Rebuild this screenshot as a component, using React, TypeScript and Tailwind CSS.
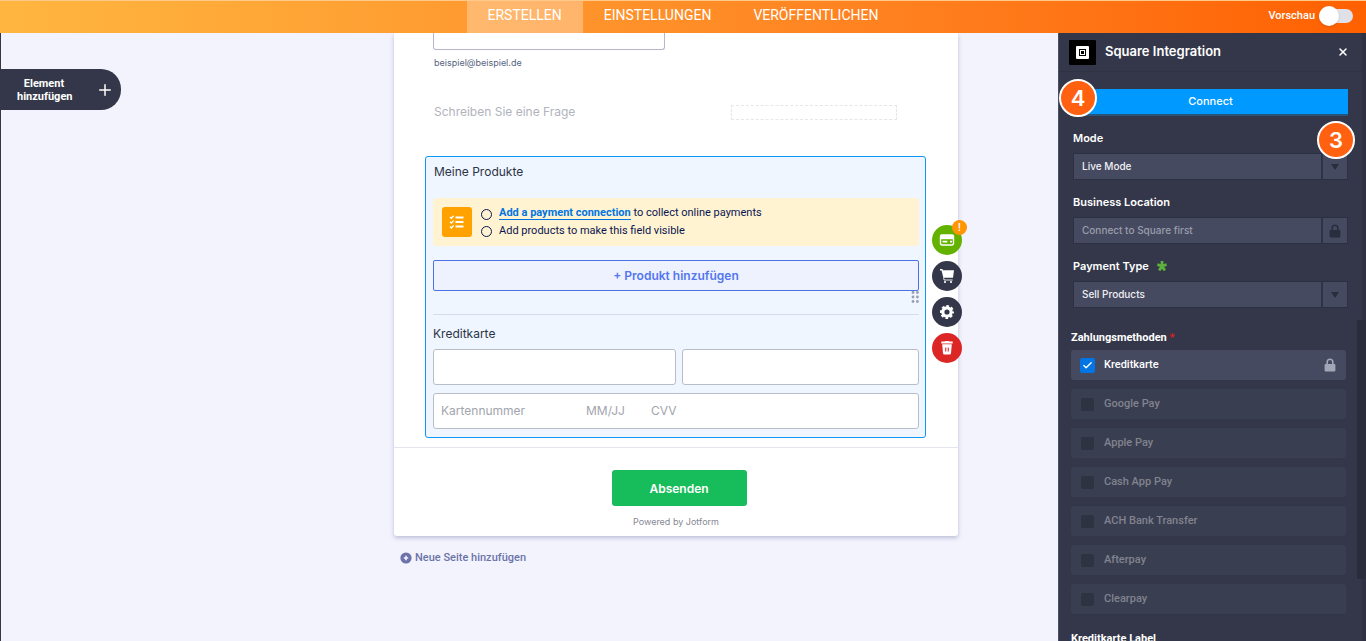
import React, { useState } from "react";
import { Check, Plus, X } from "lucide-react";

interface PaymentMethod {
  id: string;
  label: string;
}

const tabs: string[] = ["ERSTELLEN", "EINSTELLUNGEN", "VERÖFFENTLICHEN"];

const lockedMethods: PaymentMethod[] = [
  { id: "google", label: "Google Pay" },
  { id: "apple", label: "Apple Pay" },
  { id: "cashapp", label: "Cash App Pay" },
  { id: "ach", label: "ACH Bank Transfer" },
  { id: "afterpay", label: "Afterpay" },
  { id: "clearpay", label: "Clearpay" },
];

const LockIcon = ({ className }: { className: string }) => (
  <svg viewBox="0 0 12 14" className={className} fill="currentColor" aria-hidden="true">
    <path d="M6 0.5A3.6 3.6 0 0 0 2.4 4.1V6H1.6A1 1 0 0 0 0.6 7v5.5a1 1 0 0 0 1 1h8.8a1 1 0 0 0 1-1V7a1 1 0 0 0-1-1H9.6V4.1A3.6 3.6 0 0 0 6 0.5Zm0 1.6a2 2 0 0 1 2 2V6H4V4.1a2 2 0 0 1 2-2Z" />
  </svg>
);

const SquareLogo = () => (
  <svg viewBox="0 0 27 25" className="h-[25px] w-[27px]" aria-hidden="true">
    <rect width="27" height="25" rx="1" fill="#000" />
    <rect x="7" y="6" width="13" height="13" rx="1" fill="#fff" />
    <rect x="10" y="9" width="7" height="7" fill="#000" />
    <rect x="11" y="10" width="5" height="5" fill="#fff" />
    <rect x="12" y="11" width="3" height="3" fill="#000" />
  </svg>
);

const ChecklistIcon = () => (
  <svg viewBox="0 0 16 16" className="h-4 w-4" fill="none" stroke="#fff" aria-hidden="true">
    <path d="M1 3l1.4 1.3L4.6 1.8M1 7.8l1.4 1.3 2.2-2.5M1 12.6l1.4 1.3 2.2-2.5" strokeWidth="1.4" />
    <path d="M6.5 3.5h8M6.5 8h8M6.5 12.5h8" strokeWidth="1.8" />
  </svg>
);

const CardIcon = () => (
  <svg viewBox="0 0 16 12" className="h-3 w-4" aria-hidden="true">
    <rect x="1.5" y="1" width="13" height="10" rx="1.4" fill="none" stroke="#fff" strokeWidth="1.4" />
    <path d="M1.5 1h13v4.2h-13z" fill="#fff" />
    <path d="M3.5 7.6h4.8M11 7.6h2" stroke="#fff" strokeWidth="1.6" />
  </svg>
);

const CartIcon = () => (
  <svg viewBox="0 0 16 16" className="h-4 w-4" fill="#fff" aria-hidden="true">
    <path d="M1 1h2.4l.5 1.2H15l-1 7.6H4.3L2.6 2.4H1z" />
    <path d="M4.6 9.8l.5 2.2h8.6" fill="none" stroke="#fff" strokeWidth="0.9" />
    <circle cx="6" cy="14" r="1.1" />
    <circle cx="12" cy="14" r="1.1" />
  </svg>
);

const GearIcon = () => (
  <svg viewBox="0 0 16 16" className="h-4 w-4" aria-hidden="true">
    <circle cx="8" cy="8" r="4.2" fill="none" stroke="#fff" strokeWidth="3.2" />
    <circle cx="8" cy="8" r="6" fill="none" stroke="#fff" strokeWidth="2" strokeDasharray="2.7 2.012" strokeDashoffset="1.35" />
  </svg>
);

const TrashIcon = () => (
  <svg viewBox="0 0 14 16" className="h-4 w-[14px]" fill="#fff" aria-hidden="true">
    <path d="M1.3 1.6h3.3L5.4 1h3.2l.8.6h3.3v1.8H1.3z" />
    <path d="M2.2 4.2h9.6l-.8 9a1.4 1.4 0 0 1-1.4 1.3H4.4A1.4 1.4 0 0 1 3 13.2zM5.2 7.4v4h1.1v-4zm2.5 0v4h1.1v-4z" fillRule="evenodd" />
  </svg>
);

interface PanelSelectProps {
  id: string;
  label: React.ReactNode;
  value: string;
  locked?: boolean;
}

const PanelSelect: React.FC<PanelSelectProps> = ({ id, label, value, locked }) => (
  <div>
    <label htmlFor={id} className="flex h-4 items-center text-[11px] font-semibold text-white">
      {label}
    </label>
    <div className="mt-[7px] flex h-[27px] gap-0.5 border border-[#2d3042] bg-[#2f3346]">
      <select
        id={id}
        disabled={locked}
        className={`min-w-0 flex-1 appearance-none bg-[#454a60] px-2 text-[10px] font-medium ${
          locked ? "text-[#9b9dab]" : "text-[#f0f0f4]"
        }`}
      >
        <option>{value}</option>
      </select>
      <span className="flex w-6 items-center justify-center bg-[#454a60] text-[#2a2d3d]">
        {locked ? (
          <LockIcon className="h-[14px] w-3" />
        ) : (
          <svg viewBox="0 0 8 6" className="h-[6px] w-2" fill="currentColor" aria-hidden="true">
            <path d="M0 0h8L4 6z" />
          </svg>
        )}
      </span>
    </div>
  </div>
);

const StepBadge = ({ step, className }: { step: number; className: string }) => (
  <span
    className={`absolute flex h-[38px] w-[38px] items-center justify-center rounded-full border-2 border-white bg-[#ff6110] text-[22px] font-semibold text-white ${className}`}
  >
    {step}
  </span>
);

const Header = () => {
  const [preview, setPreview] = useState(false);

  return (
    <header className="relative flex h-[33px] shrink-0 justify-center border-t border-[#ffc98a] bg-linear-to-r from-[#ffb640] to-[#ff6000] font-[Roboto,'Liberation_Sans',sans-serif]">
      <nav className="flex">
        {tabs.map((tab, index) => (
          <button
            key={tab}
            className={`px-[21px] pb-1 text-sm text-white ${index === 0 ? "bg-white/30" : ""}`}
          >
            {tab}
          </button>
        ))}
      </nav>
      <label className="absolute inset-y-0 right-[13px] flex items-center gap-1 pb-0.5 text-[11px] font-medium text-white">
        Vorschau
        <span className="relative flex h-5 w-[34px] items-center">
          <input
            type="checkbox"
            role="switch"
            checked={preview}
            onChange={() => setPreview(!preview)}
            className="peer h-[14px] w-[34px] appearance-none rounded-full bg-[#e0e0e8]"
          />
          <span className="pointer-events-none absolute left-0 h-5 w-5 rounded-full bg-white shadow peer-checked:left-[14px]"></span>
        </span>
      </label>
    </header>
  );
};

const FieldActions = () => (
  <div className="absolute top-[68px] -right-[37px] flex flex-col gap-1.5 text-white">
    <button aria-label="Zahlung" className="relative flex h-[30px] w-[30px] items-center justify-center rounded-full bg-[#64b200]">
      <CardIcon />
      <span className="absolute -top-[5px] -right-[5px] flex h-[15px] w-[15px] items-center justify-center rounded-full bg-[#ff9500] text-[11px] font-medium">
        !
      </span>
    </button>
    <button aria-label="Warenkorb" className="flex h-[30px] w-[30px] items-center justify-center rounded-full bg-[#343749]">
      <CartIcon />
    </button>
    <button aria-label="Einstellungen" className="flex h-[30px] w-[30px] items-center justify-center rounded-full bg-[#343749]">
      <GearIcon />
    </button>
    <button aria-label="Löschen" className="flex h-[30px] w-[30px] items-center justify-center rounded-full bg-[#dc2626]">
      <TrashIcon />
    </button>
  </div>
);

const ProductField = () => (
  <section className="relative mt-9 mr-8 ml-[31px] rounded-[3px] border border-[#0f96f5] bg-[#eff6ff] pt-1.5 pr-1.5 pb-2 pl-[7px]">
    <h2 className="h-[18px] pl-px text-xs leading-[18px] text-[#2c3345]">Meine Produkte</h2>

    <div className="mt-[17px] flex h-12 items-center rounded-[4px] bg-[#fff3d1] px-[9px] text-[#0a1551]">
      <span className="flex h-[30px] w-[30px] items-center justify-center rounded-[3px] bg-[#ffa200]">
        <ChecklistIcon />
      </span>
      <ul className="ml-[9px] font-[Roboto,'Liberation_Sans',sans-serif] text-[11px] leading-[18px]">
        <li className="flex items-center gap-[7px]">
          <span className="mt-0.5 h-[11px] w-[11px] shrink-0 rounded-full border border-[#0a1551]"></span>
          <span>
            <a href="#connect" className="border-b border-[#0075e3] font-bold text-[#0075e3]">
              Add a payment connection
            </a>{" "}
            to collect online payments
          </span>
        </li>
        <li className="flex items-center gap-[7px]">
          <span className="h-[11px] w-[11px] shrink-0 rounded-full border border-[#0a1551]"></span>
          Add products to make this field visible
        </li>
      </ul>
    </div>

    <button className="mt-3.5 flex h-[31px] w-full items-center justify-center rounded-[2px] border border-[#4c72e8] bg-[#eef2ff] text-xs font-semibold text-[#5376ee]">
      + Produkt hinzufügen
    </button>

    <div className="flex h-[23px] justify-end">
      <svg viewBox="0 0 8 12" className="h-3 w-2" fill="#9a9eb2" aria-hidden="true">
        <circle cx="2" cy="1.5" r="1.4" />
        <circle cx="6.4" cy="1.5" r="1.4" />
        <circle cx="2" cy="6" r="1.4" />
        <circle cx="6.4" cy="6" r="1.4" />
        <circle cx="2" cy="10.5" r="1.4" />
        <circle cx="6.4" cy="10.5" r="1.4" />
      </svg>
    </div>

    <div className="border-t border-[#d5dceb] pt-2.5">
      <h2 className="h-[18px] text-xs leading-[18px] text-[#2c3345]">Kreditkarte</h2>
      <div className="mt-1.5 flex gap-1.5">
        <input aria-label="Vorname" className="h-9 w-[243px] rounded-[3px] border border-[#b8bdc9] bg-white px-2" />
        <input aria-label="Nachname" className="h-9 min-w-0 flex-1 rounded-[3px] border border-[#b8bdc9] bg-white px-2" />
      </div>
      <div className="mt-2 flex h-9 rounded-[3px] border border-[#b8bdc9] bg-white px-[7px] text-xs">
        <input aria-label="Kartennummer" placeholder="Kartennummer" className="w-[145px] placeholder:text-[#a2a4ae]" />
        <input aria-label="Ablaufdatum" placeholder="MM/JJ" className="w-[65px] placeholder:text-[#a2a4ae]" />
        <input aria-label="CVV" placeholder="CVV" className="min-w-0 flex-1 placeholder:text-[#a2a4ae]" />
      </div>
    </div>
    <FieldActions />
  </section>
);

const FormCanvas = () => (
  <div className="w-[564px] shrink-0">
    <div className="rounded-b-[3px] bg-white shadow-[0_2px_4px_rgba(84,95,140,0.35)]">
      <div className="flex flex-col pl-[39px]">
        <input
          id="email"
          type="email"
          className="h-[17px] w-[232px] rounded-b-[3px] border border-t-0 border-[#b8b6cc] px-2"
        />
        <label htmlFor="email" className="mt-1.5 pl-px text-[9px] leading-[14px] text-[#57647e]">
          beispiel@beispiel.de
        </label>
      </div>
      <div className="mt-[34px] flex items-center justify-between pr-[61px] pl-10">
        <span className="text-xs leading-4 text-[#b1b3bb]">Schreiben Sie eine Frage</span>
        <span className="h-[15px] w-[166px] border border-dashed border-[#e6e6e9]"></span>
      </div>

      <ProductField />

      <div className="mt-[9px] flex flex-col items-center border-t border-[#e3e5f0] pt-[22px] pb-1.5">
        <button className="mr-[-6px] h-9 w-[135px] rounded-[3px] bg-[#18bd5b] pt-0.5 text-xs font-semibold text-white">
          Absenden
        </button>
        <p className="mt-2 text-[9px] leading-4 text-[#868893]">Powered by Jotform</p>
      </div>
    </div>
    <button className="mt-3 ml-1.5 flex h-5 items-center gap-[3px] font-[Roboto,'Liberation_Sans',sans-serif] text-[11px] font-medium text-[#6c73a8]">
      <svg viewBox="0 0 12 12" className="h-3 w-3" aria-hidden="true">
        <circle cx="6" cy="6" r="5.6" fill="#6c73a8" />
        <path d="M6 3.8v4.4M3.8 6h4.4" stroke="#f3f3fe" strokeWidth="1.6" />
      </svg>
      Neue Seite hinzufügen
    </button>
  </div>
);

const IntegrationPanel = () => {
  const [creditCard, setCreditCard] = useState(true);

  return (
    <aside className="relative w-[308px] shrink-0 border-l border-[#4b4f66] bg-[#343749] text-white">
      <div className="flex h-[39px] items-center border-b border-[#2f3243] pr-[17px] pl-2.5">
        <SquareLogo />
        <h2 className="ml-[9px] flex-1 text-[13px] font-semibold">Square Integration</h2>
        <button aria-label="Schließen">
          <X size={12} strokeWidth={3} />
        </button>
      </div>

      <div className="pt-[17px] pr-[18px] pl-3.5">
        <button className="block h-[25px] w-full bg-[#0099ff] text-[11px] font-medium shadow-[0_2px_0_#2a5478]">
          Connect
        </button>
        <div className="mt-4 flex flex-col gap-3.5">
          <PanelSelect id="mode" label="Mode" value="Live Mode" />
          <PanelSelect id="location" label="Business Location" value="Connect to Square first" locked />
          <PanelSelect
            id="type"
            label={
              <>
                Payment Type
                <svg viewBox="0 0 10 10" className="ml-2 h-2.5 w-2.5" aria-hidden="true">
                  <path d="M5 5V0M5 5L0.4 3.6M5 5l4.6-1.4M5 5L2.2 9.4M5 5l2.8 4.4" stroke="#5db13c" strokeWidth="2.8" />
                </svg>
              </>
            }
            value="Sell Products"
          />
        </div>
      </div>

      <fieldset className="mt-[22px] pr-5 pl-3 font-[Roboto,'Liberation_Sans',sans-serif]">
        <legend className="h-4 text-[11px] leading-4 font-bold">
          Zahlungsmethoden <span className="text-[#e02020]">*</span>
        </legend>
        <div className="mt-1 flex flex-col gap-[9px] text-[11px] font-medium">
          <label className="flex h-[30px] items-center rounded-[3px] bg-[#454a60] pr-2.5 pl-[9px]">
            <span className="relative flex h-[15px] w-[15px]">
              <input
                type="checkbox"
                checked={creditCard}
                onChange={() => setCreditCard(!creditCard)}
                className="h-[15px] w-[15px] appearance-none rounded-[2px] bg-[#2c303f] checked:bg-[#0075e3]"
              />
              {creditCard && <Check size={11} strokeWidth={3} className="pointer-events-none absolute top-0.5 left-0.5" />}
            </span>
            <span className="ml-[9px] flex-1">Kreditkarte</span>
            <LockIcon className="h-[14px] w-3 text-[#a3a6b6]" />
          </label>
          {lockedMethods.map((method) => (
            <label
              key={method.id}
              className="flex h-[30px] items-center rounded-[3px] bg-[#3a3e51] px-2.5 text-[#81838f]"
            >
              <input type="checkbox" disabled className="h-[13px] w-[13px] appearance-none rounded-[2px] bg-[#2e3341]" />
              <span className="ml-2.5">{method.label}</span>
            </label>
          ))}
        </div>
      </fieldset>
      <h3 className="mt-[17px] pl-3 font-[Roboto,'Liberation_Sans',sans-serif] text-[11px] leading-4 font-bold">
        Kreditkarte Label
      </h3>

      <div className="absolute top-0 right-0 h-full w-1 bg-[#2f3142]"></div>
      <div className="absolute top-[287px] right-0 h-[259px] w-[9px] bg-[#2a2c3b]"></div>
      <StepBadge step={4} className="top-[46px] left-0" />
      <StepBadge step={3} className="top-[88px] right-[11px]" />
    </aside>
  );
};

const App: React.FC = () => {
  return (
    <div className="flex h-screen flex-col overflow-hidden bg-[#f3f3fe] font-[Inter,'Liberation_Sans',sans-serif]">
      <Header />
      <main className="flex min-h-0 flex-1">
        <div className="min-w-0 flex-1 border-l border-[#343749] pt-9">
          <button className="flex h-[41px] w-[120px] items-center justify-between rounded-r-[20px] bg-[#343749] pr-[7px] pl-4 font-[Roboto,'Liberation_Sans',sans-serif] text-[11px] leading-[13px] font-bold text-white">
            <span className="w-[54px] text-center">Element hinzufügen</span>
            <Plus size={18} strokeWidth={2} />
          </button>
        </div>
        <FormCanvas />
        <div className="w-[100px] shrink-0"></div>
        <IntegrationPanel />
      </main>
    </div>
  );
};

export default App;
